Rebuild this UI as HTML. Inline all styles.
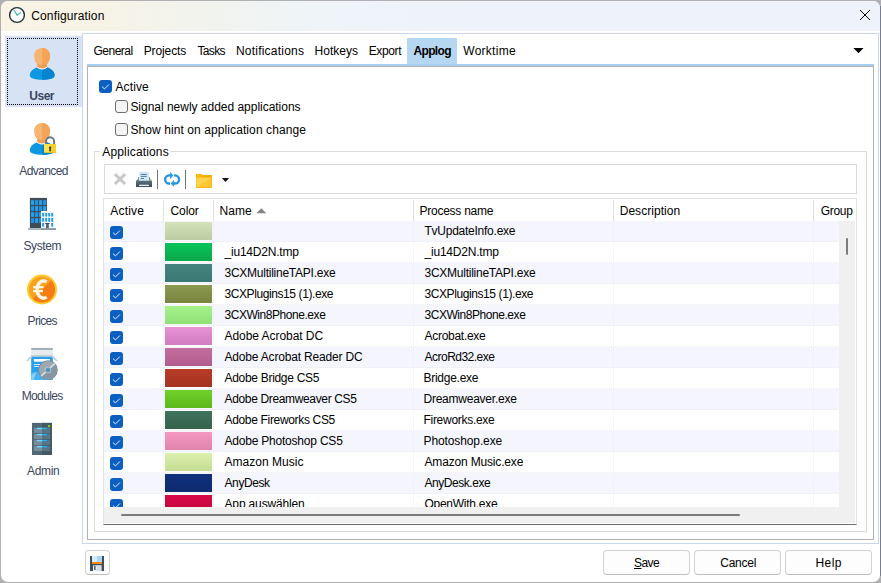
<!DOCTYPE html>
<html><head><meta charset="utf-8"><title>Configuration</title>
<style>
*{box-sizing:border-box;margin:0;padding:0}
html,body{width:881px;height:583px;overflow:hidden}
body{background:#b0b0b3;font-family:"Liberation Sans",sans-serif;font-size:12px;color:#000;position:relative}
.a{position:absolute}
.t{position:absolute;white-space:pre;line-height:16px;font-size:12px}
#win{position:absolute;left:1px;top:1px;width:879px;height:581px;background:#fff;border-radius:7px;overflow:hidden}
#title{position:absolute;left:0;top:0;width:879px;height:30px;background:linear-gradient(90deg,#f9f4e4 0,#f7f3e6 90px,#f2f3ee 200px,#eef4f8 330px,#eef2fb 520px,#eef3fb 879px)}
.cb{position:absolute;width:13px;height:13px;border-radius:3px}
.cb.on{background:#0b5fc1}
.cb.off{background:#f4f4f4;border:1px solid #6e6e6e}
.btn{position:absolute;top:549.5px;width:87px;height:24px;background:#fdfdfd;border:1px solid #d2d2d2;border-bottom-color:#bdbdbd;border-radius:4px}
.row{position:absolute;left:103px;width:736px;height:21px}
.row.odd{background:#f5f6fd}
.sw{position:absolute;left:165px;width:47px;height:18px}
.hsep{position:absolute;top:200px;width:1px;height:21px;background:#e2e2e2}
.vdot{position:absolute;top:221px;width:1px;height:286px;background:repeating-linear-gradient(180deg,transparent 0 1px,#ededf0 1px 2px)}
.hdot{position:absolute;left:104px;width:735px;height:1px;background:repeating-linear-gradient(90deg,transparent 0 1px,#ededf0 1px 2px)}
</style></head><body>
<div class="a" style="left:880px;top:6px;width:1px;height:570px;background:#767e90"></div>
<div id="win">
<div id="title"></div>

<svg class="a" style="left:7px;top:5px" width="18" height="18" viewBox="0 0 18 18"><circle cx="9" cy="9" r="7.4" fill="#fff" stroke="#1c2f3a" stroke-width="1.4"/><path d="M6.2 4.4 L9 9.2 L12.6 6.8" fill="none" stroke="#5bbcbc" stroke-width="1.3" stroke-linecap="round" stroke-linejoin="round"/></svg>
<svg class="a" style="left:858px;top:8px" width="12" height="12" viewBox="0 0 12 12"><path d="M1 1 L11 11 M11 1 L1 11" stroke="#000" stroke-width="1" fill="none"/></svg>
<div class="a" style="left:4px;top:35px;width:77px;height:71px;background:#d7e3f5"></div>
<div class="a" style="left:6px;top:37px;width:71px;height:67px;border:1px dotted #000"></div>
<div class="a" style="left:81px;top:32px;width:797px;height:511px;border:1px solid #c7d6ec;background:#fff"></div>
<div class="a" style="left:406px;top:37px;width:50px;height:26px;background:#b6d7f1"></div>
<div class="a" style="left:86px;top:63px;width:787px;height:2px;background:#a8cef0"></div>
<div class="a" style="left:86px;top:65px;width:787px;height:474px;border:1px solid #b2b2b2;background:#fff"></div>
<svg class="a" style="left:852px;top:46px" width="11" height="7" viewBox="0 0 11 7"><path d="M0.5 1 L10.5 1 L5.5 6.2 Z" fill="#000"/></svg>
<div class="cb on" style="left:98px;top:79px"><svg width="13" height="13" viewBox="0 0 13 13" style="display:block"><path d="M3.3 6.9 L5.5 8.9 L9.6 4.8" fill="none" stroke="#fff" stroke-width="0.9" stroke-linecap="round" stroke-linejoin="round"/></svg></div>
<div class="cb off" style="left:114px;top:99px"></div>
<div class="cb off" style="left:114px;top:122px"></div>
<div class="a" style="left:93px;top:150px;width:773px;height:381px;border:1px solid #dcdcdc"></div>
<div class="a" style="left:99px;top:145px;width:70px;height:12px;background:#fff"></div>
<div class="a" style="left:103px;top:163px;width:753px;height:30px;border:1px solid #d9d9d9;background:#fff"></div>
<div class="a" style="left:102px;top:197px;width:754px;height:327px;border:1px solid #e3e3e3;border-bottom-color:#707070;background:#fff"></div>
<div class="row odd" style="left:103px;top:220px;height:21px;width:735px"></div>
<div class="row" style="left:103px;top:241px;height:21px;width:735px"></div>
<div class="row odd" style="left:103px;top:262px;height:21px;width:735px"></div>
<div class="row" style="left:103px;top:283px;height:21px;width:735px"></div>
<div class="row odd" style="left:103px;top:304px;height:21px;width:735px"></div>
<div class="row" style="left:103px;top:325px;height:21px;width:735px"></div>
<div class="row odd" style="left:103px;top:346px;height:21px;width:735px"></div>
<div class="row" style="left:103px;top:367px;height:21px;width:735px"></div>
<div class="row odd" style="left:103px;top:388px;height:21px;width:735px"></div>
<div class="row" style="left:103px;top:409px;height:21px;width:735px"></div>
<div class="row odd" style="left:103px;top:430px;height:21px;width:735px"></div>
<div class="row" style="left:103px;top:451px;height:21px;width:735px"></div>
<div class="row odd" style="left:103px;top:472px;height:21px;width:735px"></div>
<div class="row" style="left:103px;top:493px;height:13px;width:735px"></div>
<div class="hdot" style="left:103px;top:240px"></div>
<div class="hdot" style="left:103px;top:261px"></div>
<div class="hdot" style="left:103px;top:282px"></div>
<div class="hdot" style="left:103px;top:303px"></div>
<div class="hdot" style="left:103px;top:324px"></div>
<div class="hdot" style="left:103px;top:345px"></div>
<div class="hdot" style="left:103px;top:366px"></div>
<div class="hdot" style="left:103px;top:387px"></div>
<div class="hdot" style="left:103px;top:408px"></div>
<div class="hdot" style="left:103px;top:429px"></div>
<div class="hdot" style="left:103px;top:450px"></div>
<div class="hdot" style="left:103px;top:471px"></div>
<div class="hdot" style="left:103px;top:492px"></div>
<div class="vdot" style="left:162px;top:220px"></div>
<div class="hsep" style="left:162px;top:199px"></div>
<div class="vdot" style="left:212px;top:220px"></div>
<div class="hsep" style="left:212px;top:199px"></div>
<div class="vdot" style="left:412px;top:220px"></div>
<div class="hsep" style="left:412px;top:199px"></div>
<div class="vdot" style="left:612px;top:220px"></div>
<div class="hsep" style="left:612px;top:199px"></div>
<div class="vdot" style="left:812px;top:220px"></div>
<div class="hsep" style="left:812px;top:199px"></div>
<div class="sw" style="left:164px;top:221px;height:18px;background:linear-gradient(180deg,#d4e2b8,#bccba2)"></div>
<div class="cb on" style="left:109px;top:225px"><svg width="13" height="13" viewBox="0 0 13 13" style="display:block"><path d="M3.3 6.9 L5.5 8.9 L9.6 4.8" fill="none" stroke="#fff" stroke-width="0.9" stroke-linecap="round" stroke-linejoin="round"/></svg></div>
<div class="sw" style="left:164px;top:242px;height:18px;background:linear-gradient(180deg,#08c458,#0aa84c)"></div>
<div class="cb on" style="left:109px;top:246px"><svg width="13" height="13" viewBox="0 0 13 13" style="display:block"><path d="M3.3 6.9 L5.5 8.9 L9.6 4.8" fill="none" stroke="#fff" stroke-width="0.9" stroke-linecap="round" stroke-linejoin="round"/></svg></div>
<div class="sw" style="left:164px;top:263px;height:18px;background:linear-gradient(180deg,#44857f,#3a7873)"></div>
<div class="cb on" style="left:109px;top:267px"><svg width="13" height="13" viewBox="0 0 13 13" style="display:block"><path d="M3.3 6.9 L5.5 8.9 L9.6 4.8" fill="none" stroke="#fff" stroke-width="0.9" stroke-linecap="round" stroke-linejoin="round"/></svg></div>
<div class="sw" style="left:164px;top:284px;height:18px;background:linear-gradient(180deg,#8c9a50,#78843f)"></div>
<div class="cb on" style="left:109px;top:288px"><svg width="13" height="13" viewBox="0 0 13 13" style="display:block"><path d="M3.3 6.9 L5.5 8.9 L9.6 4.8" fill="none" stroke="#fff" stroke-width="0.9" stroke-linecap="round" stroke-linejoin="round"/></svg></div>
<div class="sw" style="left:164px;top:305px;height:18px;background:linear-gradient(180deg,#a6f28a,#90e078)"></div>
<div class="cb on" style="left:109px;top:309px"><svg width="13" height="13" viewBox="0 0 13 13" style="display:block"><path d="M3.3 6.9 L5.5 8.9 L9.6 4.8" fill="none" stroke="#fff" stroke-width="0.9" stroke-linecap="round" stroke-linejoin="round"/></svg></div>
<div class="sw" style="left:164px;top:326px;height:18px;background:linear-gradient(180deg,#e892d8,#d07cc0)"></div>
<div class="cb on" style="left:109px;top:330px"><svg width="13" height="13" viewBox="0 0 13 13" style="display:block"><path d="M3.3 6.9 L5.5 8.9 L9.6 4.8" fill="none" stroke="#fff" stroke-width="0.9" stroke-linecap="round" stroke-linejoin="round"/></svg></div>
<div class="sw" style="left:164px;top:347px;height:18px;background:linear-gradient(180deg,#c46ea0,#b05c8c)"></div>
<div class="cb on" style="left:109px;top:351px"><svg width="13" height="13" viewBox="0 0 13 13" style="display:block"><path d="M3.3 6.9 L5.5 8.9 L9.6 4.8" fill="none" stroke="#fff" stroke-width="0.9" stroke-linecap="round" stroke-linejoin="round"/></svg></div>
<div class="sw" style="left:164px;top:368px;height:18px;background:linear-gradient(180deg,#b83c28,#a53420)"></div>
<div class="cb on" style="left:109px;top:372px"><svg width="13" height="13" viewBox="0 0 13 13" style="display:block"><path d="M3.3 6.9 L5.5 8.9 L9.6 4.8" fill="none" stroke="#fff" stroke-width="0.9" stroke-linecap="round" stroke-linejoin="round"/></svg></div>
<div class="sw" style="left:164px;top:389px;height:18px;background:linear-gradient(180deg,#70d028,#5cb81c)"></div>
<div class="cb on" style="left:109px;top:393px"><svg width="13" height="13" viewBox="0 0 13 13" style="display:block"><path d="M3.3 6.9 L5.5 8.9 L9.6 4.8" fill="none" stroke="#fff" stroke-width="0.9" stroke-linecap="round" stroke-linejoin="round"/></svg></div>
<div class="sw" style="left:164px;top:410px;height:18px;background:linear-gradient(180deg,#3f735c,#35634e)"></div>
<div class="cb on" style="left:109px;top:414px"><svg width="13" height="13" viewBox="0 0 13 13" style="display:block"><path d="M3.3 6.9 L5.5 8.9 L9.6 4.8" fill="none" stroke="#fff" stroke-width="0.9" stroke-linecap="round" stroke-linejoin="round"/></svg></div>
<div class="sw" style="left:164px;top:431px;height:18px;background:linear-gradient(180deg,#f498c0,#e084ac)"></div>
<div class="cb on" style="left:109px;top:435px"><svg width="13" height="13" viewBox="0 0 13 13" style="display:block"><path d="M3.3 6.9 L5.5 8.9 L9.6 4.8" fill="none" stroke="#fff" stroke-width="0.9" stroke-linecap="round" stroke-linejoin="round"/></svg></div>
<div class="sw" style="left:164px;top:452px;height:18px;background:linear-gradient(180deg,#dcf0ac,#c4dc94)"></div>
<div class="cb on" style="left:109px;top:456px"><svg width="13" height="13" viewBox="0 0 13 13" style="display:block"><path d="M3.3 6.9 L5.5 8.9 L9.6 4.8" fill="none" stroke="#fff" stroke-width="0.9" stroke-linecap="round" stroke-linejoin="round"/></svg></div>
<div class="sw" style="left:164px;top:473px;height:18px;background:linear-gradient(180deg,#10307e,#0e2a70)"></div>
<div class="cb on" style="left:109px;top:477px"><svg width="13" height="13" viewBox="0 0 13 13" style="display:block"><path d="M3.3 6.9 L5.5 8.9 L9.6 4.8" fill="none" stroke="#fff" stroke-width="0.9" stroke-linecap="round" stroke-linejoin="round"/></svg></div>
<div class="sw" style="left:164px;top:494px;height:12px;background:linear-gradient(180deg,#d80848,#c80640)"></div>
<div class="a" style="left:109px;top:498px;width:13px;height:8px;overflow:hidden"><div class="cb on" style="left:0;top:0"><svg width="13" height="13" viewBox="0 0 13 13" style="display:block"><path d="M3.3 6.9 L5.5 8.9 L9.6 4.8" fill="none" stroke="#fff" stroke-width="0.9" stroke-linecap="round" stroke-linejoin="round"/></svg></div></div>
<div class="a" style="left:103px;top:220px;width:735px;height:286px;overflow:hidden">
<span class="t" style="left:320.5px;top:2px;letter-spacing:-0.25px;">TvUpdateInfo.exe</span>
<span class="t" style="left:120.5px;top:23px;letter-spacing:-0.21px;">_iu14D2N.tmp</span>
<span class="t" style="left:320.5px;top:23px;letter-spacing:-0.21px;">_iu14D2N.tmp</span>
<span class="t" style="left:120.5px;top:44px;letter-spacing:-0.25px;">3CXMultilineTAPI.exe</span>
<span class="t" style="left:320.5px;top:44px;letter-spacing:-0.25px;">3CXMultilineTAPI.exe</span>
<span class="t" style="left:120.5px;top:65px;letter-spacing:-0.41px;">3CXPlugins15 (1).exe</span>
<span class="t" style="left:320.5px;top:65px;letter-spacing:-0.41px;">3CXPlugins15 (1).exe</span>
<span class="t" style="left:120.5px;top:86px;letter-spacing:-0.45px;">3CXWin8Phone.exe</span>
<span class="t" style="left:320.5px;top:86px;letter-spacing:-0.45px;">3CXWin8Phone.exe</span>
<span class="t" style="left:120.5px;top:107px;letter-spacing:-0.05px;">Adobe Acrobat DC</span>
<span class="t" style="left:320.5px;top:107px;letter-spacing:-0.28px;">Acrobat.exe</span>
<span class="t" style="left:120.5px;top:128px;letter-spacing:-0.18px;">Adobe Acrobat Reader DC</span>
<span class="t" style="left:320.5px;top:128px;letter-spacing:-0.51px;">AcroRd32.exe</span>
<span class="t" style="left:120.5px;top:149px;letter-spacing:-0.3px;">Adobe Bridge CS5</span>
<span class="t" style="left:319.5px;top:149px;letter-spacing:-0.27px;">Bridge.exe</span>
<span class="t" style="left:120.5px;top:170px;letter-spacing:-0.35px;">Adobe Dreamweaver CS5</span>
<span class="t" style="left:319.5px;top:170px;letter-spacing:-0.24px;">Dreamweaver.exe</span>
<span class="t" style="left:120.5px;top:191px;letter-spacing:-0.33px;">Adobe Fireworks CS5</span>
<span class="t" style="left:319.5px;top:191px;letter-spacing:-0.29px;">Fireworks.exe</span>
<span class="t" style="left:120.5px;top:212px;letter-spacing:-0.21px;">Adobe Photoshop CS5</span>
<span class="t" style="left:319.5px;top:212px;letter-spacing:-0.11px;">Photoshop.exe</span>
<span class="t" style="left:120.5px;top:233px;letter-spacing:0.02px;">Amazon Music</span>
<span class="t" style="left:320.5px;top:233px;letter-spacing:-0.17px;">Amazon Music.exe</span>
<span class="t" style="left:120.5px;top:254px;letter-spacing:-0.4px;">AnyDesk</span>
<span class="t" style="left:320.5px;top:254px;letter-spacing:-0.45px;">AnyDesk.exe</span>
<span class="t" style="left:120.5px;top:275px;letter-spacing:-0.15px;">App auswählen</span>
<span class="t" style="left:320.5px;top:275px;letter-spacing:-0.27px;">OpenWith.exe</span>
</div>
<svg class="a" style="left:255px;top:207px" width="11" height="6" viewBox="0 0 11 6"><path d="M0.3 5.2 L5.3 0.3 L10.3 5.2 Z" fill="#858585"/></svg>
<div class="a" style="left:838px;top:220px;width:16px;height:286px;background:#f0f0f0"></div>
<div class="a" style="left:845px;top:237px;width:2px;height:17px;background:#7c7c7c;border-radius:1px"></div>
<div class="a" style="left:103px;top:506px;width:751px;height:16px;background:#f0f0f0"></div>
<div class="a" style="left:120px;top:513px;width:619px;height:2px;background:#7c7c7c;border-radius:1px"></div>
<svg class="a" style="left:112px;top:171px" width="14" height="14" viewBox="0 0 14 14"><path d="M1.9 2.1 L12.1 12 M12.1 2.1 L1.9 12" stroke="#c8c8c8" stroke-width="2.9" fill="none" stroke-linecap="butt"/></svg>
<svg class="a" style="left:134px;top:170px" width="18" height="17" viewBox="0 0 18 17">
<defs><linearGradient id="pg" x1="0" y1="0" x2="0" y2="1"><stop offset="0" stop-color="#63798a"/><stop offset="1" stop-color="#394b58"/></linearGradient></defs>
<path d="M3.2 6.2 h1 v3 h-1 z M14 6.2 h1 v3 h-1 z" fill="#40525f"/>
<path d="M2.4 8.6 H15.6 L17 10 V16 H1 V10 Z" fill="url(#pg)"/>
<rect x="4" y="0.9" width="10" height="8.4" fill="#cde8fa" stroke="#e4f3fc" stroke-width="0.5"/>
<path d="M5.8 3.4h6M5.8 5.4h6M5.8 7.5h3.2" stroke="#4f6c82" stroke-width="0.9"/>
<rect x="4" y="13.7" width="10" height="1.4" rx="0.7" fill="#f4fbff"/>
<rect x="14.6" y="8.8" width="1.5" height="1.2" fill="#7ed321"/>
</svg>
<div class="a" style="left:156px;top:169px;width:1px;height:19px;background:#727272"></div>
<svg class="a" style="left:162px;top:170px" width="18" height="17" viewBox="0 0 18 17">
<g fill="none" stroke="#1f93e4" stroke-width="2.3">
<path d="M7.4 4.4 H6.2 A4.05 4.05 0 0 0 6.2 12.5 H7"/>
<path d="M10.6 12.5 H12 A4.05 4.05 0 0 0 12 4.4 H10.9"/>
</g>
<path d="M7.1 0.8 L10.2 4.5 L7.1 8.2 Z" fill="#1f93e4"/>
<path d="M10.9 8.7 L7.8 12.4 L10.9 16 Z" fill="#1f93e4"/>
</svg>
<div class="a" style="left:184px;top:169px;width:1px;height:19px;background:#727272"></div>
<svg class="a" style="left:194px;top:172px" width="18" height="16" viewBox="0 0 18 16">
<path d="M1 1 h6 v1 h10 v13 h-16 z" fill="#f6ad0a"/>
<rect x="1.3" y="1.3" width="5.4" height="3.4" fill="#fcb90f"/>
<rect x="1" y="4.5" width="16" height="10.5" fill="#f3b316"/>
<rect x="1.6" y="4.7" width="14.8" height="9.7" fill="#fcc62c"/>
<path d="M1.6 14.4 V4.7 H16.4 Z" fill="#fdd350"/>
</svg>
<svg class="a" style="left:220px;top:176px" width="9" height="6" viewBox="0 0 9 6"><path d="M0.9 0.9 L8.1 0.9 L4.5 4.9 Z" fill="#111"/></svg>
<div class="btn" style="left:602px;top:549px;height:25px"></div>
<div class="btn" style="left:693px;top:549px;height:25px"></div>
<div class="btn" style="left:784px;top:549px;height:25px"></div>
<div class="btn" style="left:84px;top:549px;width:25px;height:25px"></div>
<svg class="a" style="left:88px;top:554px" width="16" height="17" viewBox="0 0 16 17">
<rect x="1" y="1" width="14" height="15" fill="#3b4e5d"/>
<rect x="3" y="1" width="10" height="6.2" fill="#d6edfb"/>
<rect x="8" y="1" width="5" height="6.2" fill="#a9d6f4"/>
<rect x="3" y="7" width="10" height="2" fill="#f7870f"/>
<rect x="4" y="10.4" width="8.4" height="5.6" fill="#f2f5f7"/>
<rect x="7.4" y="10.4" width="5" height="5.6" fill="#d4dce1"/>
<rect x="5" y="11" width="1.6" height="4" fill="#4d6170"/>
</svg>
<svg class="a" style="left:26px;top:46px" width="30" height="34" viewBox="0 0 30 34">
<defs><clipPath id="u47"><rect x="15.1" y="0" width="15" height="34"/></clipPath></defs>
<path d="M2.8 28.4 C2.8 24.4 6.6 21.6 10.4 20.3 Q15.1 23.6 19.8 20.3 C23.6 21.6 27.6 24.4 27.6 28.4 C27.6 31.4 21.4 32.7 15.2 32.7 C9 32.7 2.8 31.4 2.8 28.4 Z" fill="#0d98e1"/>
<path d="M2.8 28.4 C2.8 24.4 6.6 21.6 10.4 20.3 Q15.1 23.6 19.8 20.3 C23.6 21.6 27.6 24.4 27.6 28.4 C27.6 31.4 21.4 32.7 15.2 32.7 C9 32.7 2.8 31.4 2.8 28.4 Z" fill="#0583d1" clip-path="url(#u47)"/>
<path d="M7.1 9 C7.1 4 10.6 0.9 15.1 0.9 C19.6 0.9 23.1 4 23.1 9 C23.1 12.6 21.4 15.8 19.9 17.2 V20.4 Q15.1 23.6 10.3 20.4 V17.2 C8.8 15.8 7.1 12.6 7.1 9 Z" fill="#f6b672"/>
<path d="M7.1 9 C7.1 4 10.6 0.9 15.1 0.9 C19.6 0.9 23.1 4 23.1 9 C23.1 12.6 21.4 15.8 19.9 17.2 V20.4 Q15.1 23.6 10.3 20.4 V17.2 C8.8 15.8 7.1 12.6 7.1 9 Z" fill="#f4a459" clip-path="url(#u47)"/>
<path d="M10.3 16.6 C12 18.4 18.2 18.4 19.9 16.6 V20.4 Q15.1 23.6 10.3 20.4 Z" fill="#f09a4b" opacity=".8"/>
<path d="M10 20.2 Q15.1 23.9 20.2 20.2" fill="none" stroke="#fff" stroke-width="1"/>
</svg>
<svg class="a" style="left:26px;top:121px" width="30" height="34" viewBox="0 0 30 34">
<defs><clipPath id="u122"><rect x="15.1" y="0" width="15" height="34"/></clipPath></defs>
<path d="M2.8 28.4 C2.8 24.4 6.6 21.6 10.4 20.3 Q15.1 23.6 19.8 20.3 C23.6 21.6 27.6 24.4 27.6 28.4 C27.6 31.4 21.4 32.7 15.2 32.7 C9 32.7 2.8 31.4 2.8 28.4 Z" fill="#0d98e1"/>
<path d="M2.8 28.4 C2.8 24.4 6.6 21.6 10.4 20.3 Q15.1 23.6 19.8 20.3 C23.6 21.6 27.6 24.4 27.6 28.4 C27.6 31.4 21.4 32.7 15.2 32.7 C9 32.7 2.8 31.4 2.8 28.4 Z" fill="#0583d1" clip-path="url(#u122)"/>
<path d="M7.1 9 C7.1 4 10.6 0.9 15.1 0.9 C19.6 0.9 23.1 4 23.1 9 C23.1 12.6 21.4 15.8 19.9 17.2 V20.4 Q15.1 23.6 10.3 20.4 V17.2 C8.8 15.8 7.1 12.6 7.1 9 Z" fill="#f6b672"/>
<path d="M7.1 9 C7.1 4 10.6 0.9 15.1 0.9 C19.6 0.9 23.1 4 23.1 9 C23.1 12.6 21.4 15.8 19.9 17.2 V20.4 Q15.1 23.6 10.3 20.4 V17.2 C8.8 15.8 7.1 12.6 7.1 9 Z" fill="#f4a459" clip-path="url(#u122)"/>
<path d="M10.3 16.6 C12 18.4 18.2 18.4 19.9 16.6 V20.4 Q15.1 23.6 10.3 20.4 Z" fill="#f09a4b" opacity=".8"/>
<path d="M10 20.2 Q15.1 23.9 20.2 20.2" fill="none" stroke="#fff" stroke-width="1"/>
<path d="M19.1 22.6 v-3.2 a4 4.2 0 0 1 8 0 v3.2" fill="none" stroke="#607580" stroke-width="1.9"/>
<rect x="17" y="22" width="12" height="8.6" fill="#fde24a"/>
<rect x="23" y="22" width="6" height="8.6" fill="#f6cf2a"/>
<rect x="17" y="30" width="12" height="0.8" fill="#eabf20"/>
<path d="M23.1 24.4 a1.2 1.2 0 0 1 0.7 2.2 l0.3 2.6 h-2 l0.3 -2.6 a1.2 1.2 0 0 1 0.7 -2.2 z" fill="#2f3a44"/>
</svg>
<svg class="a" style="left:26px;top:196px" width="30" height="34" viewBox="0 0 30 34"><rect x="2.9" y="0.9" width="17" height="30.2" fill="#3e4c57"/><rect x="4.05" y="3.20" width="3" height="4.7" fill="#23a3f0"/><rect x="8.05" y="3.20" width="3" height="4.7" fill="#1b98ea"/><rect x="12.05" y="3.20" width="3" height="4.7" fill="#23a3f0"/><rect x="16.05" y="3.20" width="3" height="4.7" fill="#1b98ea"/><rect x="4.05" y="9.20" width="3" height="4.7" fill="#1b98ea"/><rect x="8.05" y="9.20" width="3" height="4.7" fill="#23a3f0"/><rect x="12.05" y="9.20" width="3" height="4.7" fill="#1b98ea"/><rect x="16.05" y="9.20" width="3" height="4.7" fill="#23a3f0"/><rect x="4.05" y="15.20" width="3" height="4.7" fill="#23a3f0"/><rect x="8.05" y="15.20" width="3" height="4.7" fill="#1b98ea"/><rect x="12.05" y="15.20" width="3" height="4.7" fill="#23a3f0"/><rect x="16.05" y="15.20" width="3" height="4.7" fill="#1b98ea"/><rect x="4.05" y="21.20" width="3" height="4.7" fill="#1b98ea"/><rect x="8.05" y="21.20" width="3" height="4.7" fill="#23a3f0"/><rect x="12.05" y="21.20" width="3" height="4.7" fill="#1b98ea"/><rect x="16.05" y="21.20" width="3" height="4.7" fill="#23a3f0"/><rect x="14" y="14" width="12.8" height="17.1" fill="#f3f6f8"/><rect x="15.20" y="16" width="1.85" height="3.5" fill="#1b98ea"/><rect x="18.23" y="16" width="1.85" height="3.5" fill="#1b98ea"/><rect x="21.26" y="16" width="1.85" height="3.5" fill="#1b98ea"/><rect x="24.29" y="16" width="1.85" height="3.5" fill="#1b98ea"/><rect x="15.20" y="20.9" width="1.85" height="3.8" fill="#1b98ea"/><rect x="18.23" y="20.9" width="1.85" height="3.8" fill="#1b98ea"/><rect x="21.26" y="20.9" width="1.85" height="3.8" fill="#1b98ea"/><rect x="24.29" y="20.9" width="1.85" height="3.8" fill="#1b98ea"/><rect x="15.20" y="26" width="1.85" height="3.6" fill="#1b98ea"/><rect x="24.29" y="26" width="1.85" height="3.6" fill="#1b98ea"/><rect x="19" y="26.8" width="2.8" height="4.3" fill="#55646f"/><rect x="18.2" y="26" width="4.4" height="1" fill="#3e4c57"/><rect x="1" y="31.1" width="13" height="1.9" fill="#a8b6be"/><rect x="14" y="31.1" width="15" height="1.9" fill="#8897a1"/></svg>
<svg class="a" style="left:25px;top:272px" width="32" height="33" viewBox="0 0 32 33">
<circle cx="16" cy="16.5" r="15" fill="#fcc92e"/>
<circle cx="16" cy="16.5" r="13" fill="#f9a21f"/>
<path d="M25.2 7.3 A13 13 0 0 1 6.8 25.7 Z" fill="#f57d14"/>
<g fill="none" stroke="#fff6e4">
<path d="M20.6 9 A6.4 8.6 0 1 0 20.6 24" stroke-width="3.4"/>
<path d="M7.2 14.15 H17.6 M7.2 18.15 H17" stroke-width="2.2"/>
</g>
</svg>
<svg class="a" style="left:24px;top:346px" width="34" height="34" viewBox="0 0 34 34">
<rect x="6.2" y="0.9" width="21.6" height="2.2" fill="#a2b1b9"/>
<rect x="6.2" y="3.1" width="21.6" height="5.2" fill="#e6ebee"/>
<rect x="6.2" y="9.4" width="21.6" height="23.6" fill="#27a1e9"/>
<rect x="6.2" y="25" width="21.6" height="8" fill="#48b2f0"/>
<path d="M6.2 33 V27.4 L11.6 25 L8.4 33 Z" fill="#86cff7"/>
<path d="M6.2 8.2 H27.8 V9.6 H6.2 Z" fill="#bcc7cd"/>
<path d="M6.6 8.3 L1.2 13.4 L2.6 14.6 L7.8 9.6 Z M27.4 8.3 L32.8 13.4 L31.4 14.6 L26.2 9.6 Z" fill="#c4ced4"/>
<rect x="8.9" y="12" width="16" height="2.7" fill="#fff"/>
<rect x="8.9" y="17" width="6.4" height="1" fill="#cfeafb"/>
<rect x="8.9" y="19" width="6.4" height="1" fill="#cfeafb"/>
<circle cx="23" cy="23" r="9.8" fill="#7c8b95"/>
<circle cx="23" cy="23" r="8.9" fill="#9ca9b2"/>
<path d="M23 23 L29.3 16.7 A8.9 8.9 0 0 1 29.3 29.3 A8.9 8.9 0 0 1 16.7 29.3 Z" fill="#8797a1"/>
<path d="M15.6 28.4 L29.6 15.8 L30.6 17 L16.8 29.8 Z" fill="#eef2f4" opacity=".75"/>
<circle cx="23" cy="23" r="3.3" fill="#bfc9cf"/>
<circle cx="23" cy="23" r="2.5" fill="#82929c"/>
<circle cx="23" cy="23" r="1.4" fill="#1e9ef0"/>
</svg>
<svg class="a" style="left:30px;top:421px" width="22" height="34" viewBox="0 0 22 34"><rect x="1" y="0.9" width="20" height="32.1" fill="#506876"/><rect x="11" y="0.9" width="10" height="32.1" fill="#435766"/><rect x="2.9" y="5.80" width="16.2" height="5.1" fill="#748e9d"/><rect x="11" y="5.80" width="8.1" height="5.1" fill="#5a7382"/><rect x="5.9" y="5.80" width="5.1" height="1.4" fill="#74d2fb"/><rect x="11" y="5.80" width="5" height="1.4" fill="#20b4f5"/><rect x="2.9" y="11.85" width="16.2" height="5.1" fill="#748e9d"/><rect x="11" y="11.85" width="8.1" height="5.1" fill="#5a7382"/><rect x="5.9" y="11.85" width="5.1" height="1.4" fill="#74d2fb"/><rect x="11" y="11.85" width="5" height="1.4" fill="#20b4f5"/><rect x="2.9" y="17.90" width="16.2" height="5.1" fill="#748e9d"/><rect x="11" y="17.90" width="8.1" height="5.1" fill="#5a7382"/><rect x="5.9" y="17.90" width="5.1" height="1.4" fill="#74d2fb"/><rect x="11" y="17.90" width="5" height="1.4" fill="#20b4f5"/><rect x="2.9" y="23.95" width="16.2" height="5.1" fill="#748e9d"/><rect x="11" y="23.95" width="8.1" height="5.1" fill="#5a7382"/><rect x="5.9" y="23.95" width="5.1" height="1.4" fill="#74d2fb"/><rect x="11" y="23.95" width="5" height="1.4" fill="#20b4f5"/><rect x="16.9" y="2.9" width="2.2" height="2.3" fill="#7ac70c"/></svg>
<span class="t" style="left:30.2px;top:7px;letter-spacing:0.15px;">Configuration</span>
<span class="t" style="left:92.5px;top:42px;letter-spacing:-0.5px;">General</span>
<span class="t" style="left:142.7px;top:42px;letter-spacing:-0.11px;">Projects</span>
<span class="t" style="left:196.4px;top:42px;letter-spacing:-0.62px;">Tasks</span>
<span class="t" style="left:234.9px;top:42px;letter-spacing:0.23px;">Notifications</span>
<span class="t" style="left:313.6px;top:42px;letter-spacing:0.02px;">Hotkeys</span>
<span class="t" style="left:367.7px;top:42px;letter-spacing:-0.38px;">Export</span>
<span class="t" style="left:412.4px;top:42px;letter-spacing:-0.62px;font-weight:700;">Applog</span>
<span class="t" style="left:462.3px;top:42px;letter-spacing:0.26px;">Worktime</span>
<span class="t" style="left:114.5px;top:78px;letter-spacing:0.1px;">Active</span>
<span class="t" style="left:129.4px;top:98px;letter-spacing:-0.02px;">Signal newly added applications</span>
<span class="t" style="left:129.4px;top:121px;letter-spacing:0.09px;">Show hint on application change</span>
<span class="t" style="left:101.3px;top:143px;letter-spacing:0.15px;">Applications</span>
<span class="t" style="left:109.2px;top:202px;letter-spacing:0.22px;">Active</span>
<span class="t" style="left:169.5px;top:202px;letter-spacing:-0.1px;">Color</span>
<span class="t" style="left:218.5px;top:202px;letter-spacing:0.03px;">Name</span>
<span class="t" style="left:418.5px;top:202px;letter-spacing:-0.25px;">Process name</span>
<span class="t" style="left:618.7px;top:202px;letter-spacing:0.04px;">Description</span>
<span class="t" style="left:819.7px;top:202px;letter-spacing:-0.28px;">Group</span>
<span class="t" style="left:28.3px;top:87px;letter-spacing:-0.5px;font-weight:700;color:#3a4660;">User</span>
<span class="t" style="left:18.3px;top:162px;letter-spacing:-0.61px;color:#3a4660;">Advanced</span>
<span class="t" style="left:22.4px;top:237px;letter-spacing:-0.38px;color:#3a4660;">System</span>
<span class="t" style="left:26.6px;top:312px;letter-spacing:-0.7px;color:#3a4660;">Prices</span>
<span class="t" style="left:20.7px;top:387px;letter-spacing:-0.62px;color:#3a4660;">Modules</span>
<span class="t" style="left:26.0px;top:462px;letter-spacing:-0.33px;color:#3a4660;">Admin</span>
<span class="t" style="left:633.0px;top:554px;letter-spacing:-0.57px;"><u>S</u>ave</span>
<span class="t" style="left:719.3px;top:554px;letter-spacing:-0.26px;">Cancel</span>
<span class="t" style="left:814.4px;top:554px;letter-spacing:0.47px;">Help</span>
</div></body></html>
